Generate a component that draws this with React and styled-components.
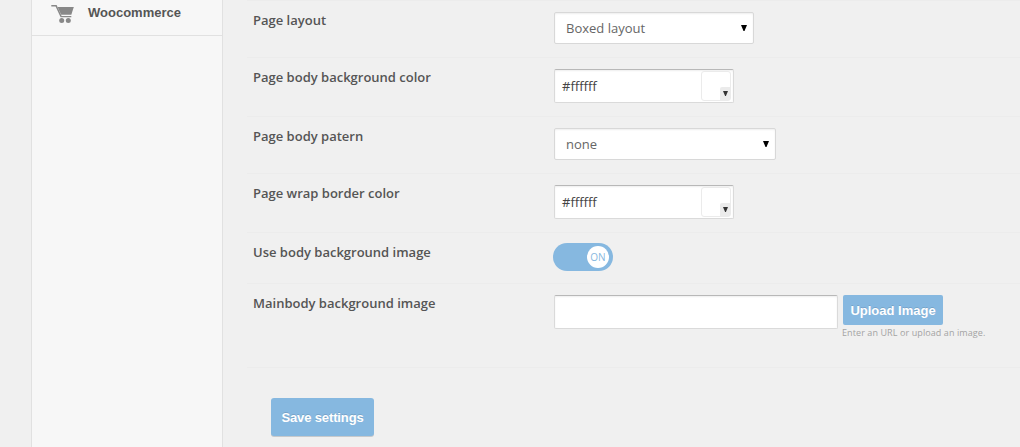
import React from "react";
import styled, { createGlobalStyle } from "styled-components";

const Global = createGlobalStyle`
  * { box-sizing: border-box; }
  body { margin: 0; background: #f0f0f0; overflow: hidden; font-family: "Open Sans", sans-serif; color: #555; }
`;
const Page = styled.div`
  display: flex;
  height: 447px;
  padding-left: 31px;
`;
const Sidebar = styled.aside`
  width: 192px;
  background: #f7f7f7;
  border: solid #e1e1e1;
  border-width: 0 1px;
`;
const MenuItem = styled.a`
  display: flex;
  align-items: center;
  height: 36px;
  padding: 0 0 10px 19px;
  border-bottom: 1px solid #e1e1e1;
  font: bold 13px/20px "Liberation Sans", Arial, sans-serif;
  color: #555;
`;
const CartIcon = styled.svg`
  width: 24px;
  height: 20px;
  margin: 3px 13px 0 0;
`;
const Main = styled.main`
  flex: 1;
  padding-left: 24px;
`;
const Row = styled.div`
  display: grid;
  grid-template-columns: 300px 1fr;
  align-items: start;
  height: ${(p) => p.$height}px;
  padding: 10px 0 0 6px;
  border-bottom: 1px solid #ececec;
`;
const TopRule = styled.div`
  height: 1px;
  background: #ececec;
`;
const Label = styled.label`
  font-size: 13px;
  font-weight: 600;
  line-height: 18px;
`;
const Field = styled.div`
  display: flex;
  align-items: flex-start;
  padding: 1px 0 0 1px;
`;
const SelectBox = styled.div`
  display: flex;
  align-items: center;
  justify-content: space-between;
  width: ${(p) => p.$width}px;
  height: 32px;
  padding: 0 6px 0 11px;
  background: #fff;
  border: 1px solid #d8d8d8;
  border-radius: 2px;
  box-shadow: inset 0 1px 2px rgba(0, 0, 0, 0.07);
  font-size: 13px;
  color: #666;
`;
const Arrow = styled.svg`
  display: block;
  width: ${(p) => p.$size}px;
  height: ${(p) => p.$size}px;
  fill: ${(p) => p.$color};
`;
const InputBox = styled.div`
  display: flex;
  align-items: center;
  justify-content: space-between;
  width: ${(p) => p.$width}px;
  height: 34px;
  padding: 0 2px 0 7px;
  background: #fff;
  border: 1px solid #dadada;
  border-top-color: #b8b8b8;
  border-radius: 2px;
  box-shadow: inset 0 1px 2px rgba(0, 0, 0, 0.07);
  font-size: 13px;
  color: #444;
`;
const Swatch = styled.div`
  display: flex;
  align-items: flex-end;
  justify-content: flex-end;
  width: 30px;
  height: 30px;
  background: #fff;
  border: 1px solid #ebebeb;
  border-radius: 3px;
`;
const SwatchHandle = styled.div`
  display: grid;
  place-items: center;
  width: 10px;
  height: 13px;
  background: #ebebeb;
  border-radius: 2px 0 0 0;
`;
const Toggle = styled.div`
  display: flex;
  align-items: center;
  justify-content: flex-end;
  width: 60px;
  height: 28px;
  margin: -1px 0 0 -1px;
  padding-right: 4px;
  border-radius: 14px;
  background: #86b8e0;
`;
const Knob = styled.span`
  display: grid;
  place-items: center;
  width: 22px;
  height: 22px;
  border-radius: 50%;
  background: #fff;
  font-size: 10px;
  color: #86b8e0;
`;
const Upload = styled.div`
  margin-left: 4px;
`;
const Button = styled.button`
  display: block;
  width: ${(p) => p.$width}px;
  height: ${(p) => p.$height}px;
  padding: 2px 0 0;
  border: 0;
  border-radius: 2px;
  background: #86b8e0;
  color: #fff;
  font: bold 13px/18px "Liberation Sans", Arial, sans-serif;
  text-shadow: 0 -1px 0 rgba(0, 0, 0, 0.12);
`;
const UploadButton = styled(Button)`
  margin-left: 1px;
`;
const SaveButton = styled(Button)`
  margin: 30px 0 0 24px;
  border-radius: 3px;
  box-shadow: 0 1px 0 #c6c9cc;
  letter-spacing: -0.13px;
`;
const Hint = styled.div`
  margin-top: 1px;
  font-size: 9px;
  line-height: 13px;
  letter-spacing: 0.09px;
  color: #a3a3a3;
`;

const DownArrow = ({ size, color }) => (
  <Arrow viewBox="0 0 6 6" $size={size} $color={color}>
    <path d="M0 0h6L3.500 6h-1z" />
  </Arrow>
);
const Select = ({ width, children }) => (
  <SelectBox $width={width}>{children}<DownArrow size={6} color="#000" /></SelectBox>
);
const ColorInput = ({ value }) => (
  <InputBox $width={180}>
    {value}
    <Swatch><SwatchHandle><DownArrow size={5} color="#333" /></SwatchHandle></Swatch>
  </InputBox>
);
const Setting = ({ label, height, children }) => (
  <Row $height={height}><Label>{label}</Label><Field>{children}</Field></Row>
);

export default function App() {
  return (
    <>
      <Global />
      <Page>
        <Sidebar>
          <MenuItem>
            <CartIcon viewBox="0 0 24 20" fill="#888">
              <path d="M0.300 1h5.300l5 11H20.300v1.300H9.600L4.600 2.500H0.300z" />
              <path d="M6.600 3H22.800L20.300 10.800H10.100z" />
              <circle cx="10.700" cy="16.400" r="2.500" />
              <circle cx="17.300" cy="16.400" r="2.500" />
            </CartIcon>
            Woocommerce
          </MenuItem>
        </Sidebar>
        <Main>
          <TopRule />
          <Setting label="Page layout" height={57}><Select width={200}>Boxed layout</Select></Setting>
          <Setting label="Page body background color" height={59}><ColorInput value="#ffffff" /></Setting>
          <Setting label="Page body patern" height={57}><Select width={222}>none</Select></Setting>
          <Setting label="Page wrap border color" height={59}><ColorInput value="#ffffff" /></Setting>
          <Setting label="Use body background image" height={51}><Toggle><Knob>ON</Knob></Toggle></Setting>
          <Setting label="Mainbody background image" height={84}>
            <InputBox $width={284} />
            <Upload>
              <UploadButton $width={100} $height={30}>Upload Image</UploadButton>
              <Hint>Enter an URL or upload an image.</Hint>
            </Upload>
          </Setting>
          <SaveButton $width={103} $height={38}>Save settings</SaveButton>
        </Main>
      </Page>
    </>
  );
}
